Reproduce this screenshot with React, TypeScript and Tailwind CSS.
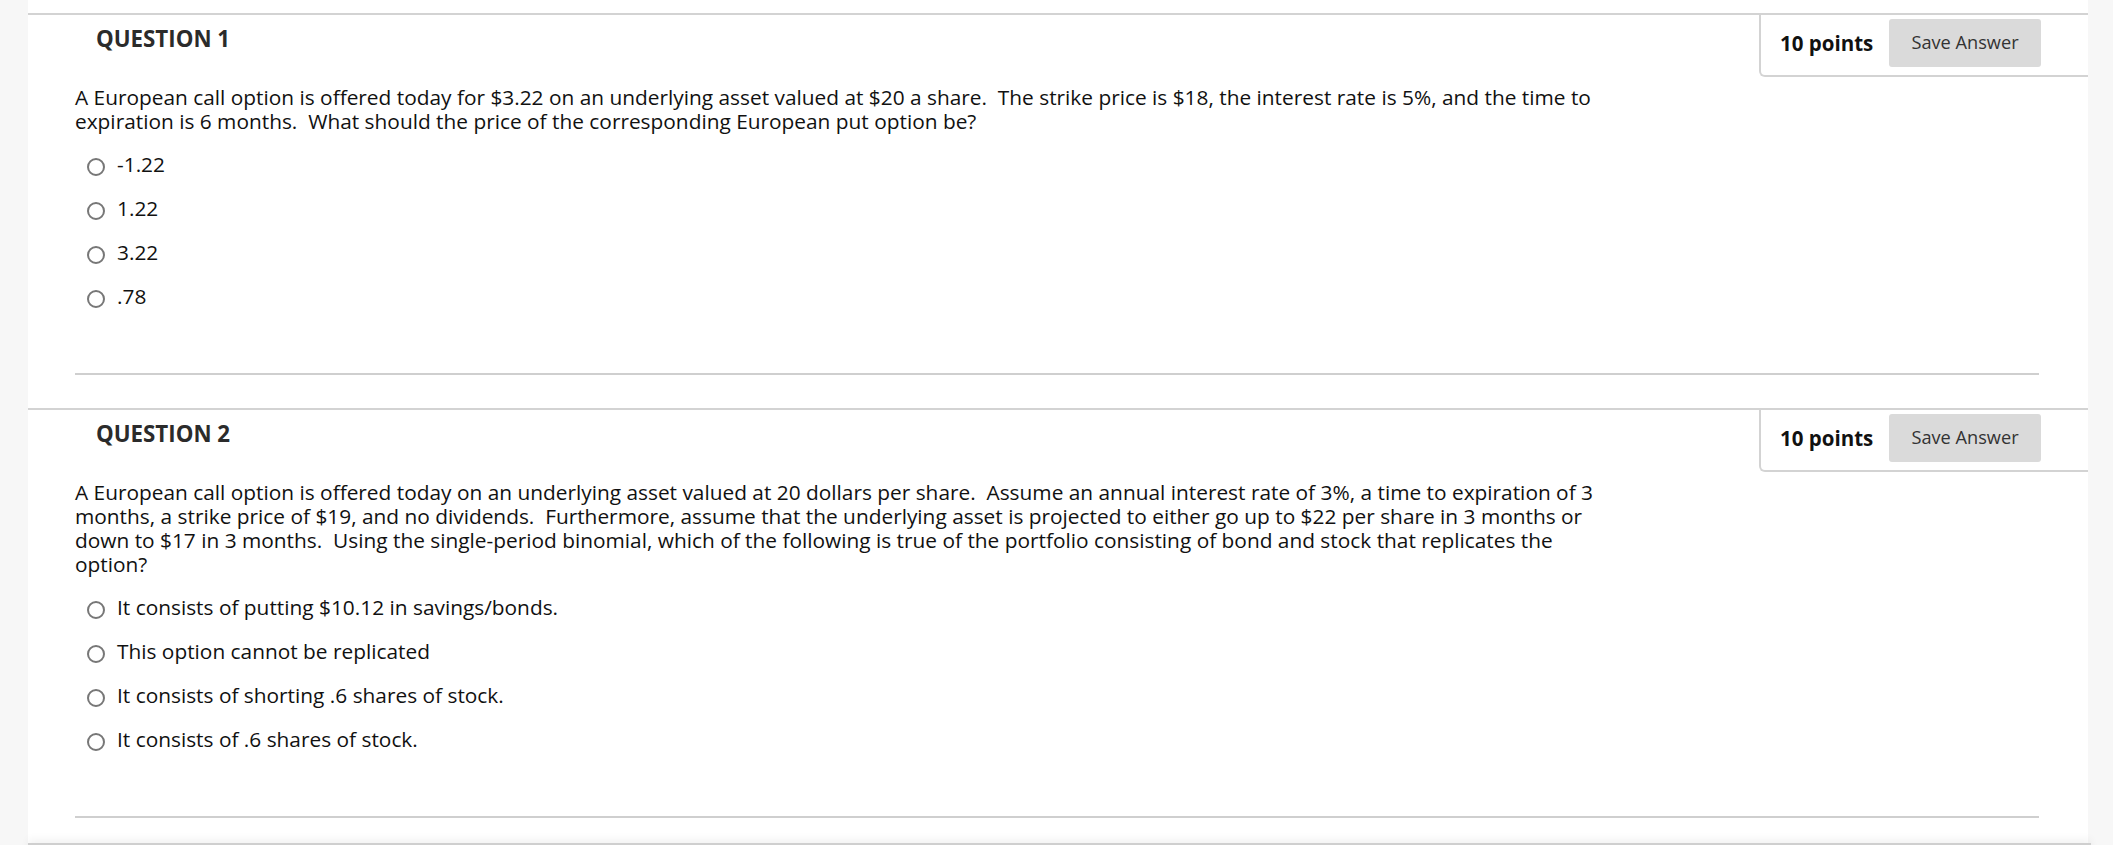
const font = { fontFamily: '"Open Sans", "Noto Sans", sans-serif' };

type Question = {
  number: number;
  points: number;
  text: string;
  answers: string[];
};

const questions: Question[] = [
  {
    number: 1,
    points: 10,
    text: "A European call option is offered today for $3.22 on an underlying asset valued at $20 a share.\u00a0 The strike price is $18, the interest rate is 5%, and the time to expiration is 6 months.\u00a0 What should the price of the corresponding European put option be?",
    answers: ["-1.22", "1.22", "3.22", ".78"],
  },
  {
    number: 2,
    points: 10,
    text: "A European call option is offered today on an underlying asset valued at 20 dollars per share.\u00a0 Assume an annual interest rate of 3%, a time to expiration of 3 months, a strike price of $19, and no dividends.\u00a0 Furthermore, assume that the underlying asset is projected to either go up to $22 per share in 3 months or down to $17 in 3 months.\u00a0 Using the single-period binomial, which of the following is true of the portfolio consisting of bond and stock that replicates the option?",
    answers: [
      "It consists of putting $10.12 in savings/bonds.",
      "This option cannot be replicated",
      "It consists of shorting .6 shares of stock.",
      "It consists of .6 shares of stock.",
    ],
  },
];

const QuestionBlock = ({ q, last }: { q: Question; last: boolean }) => {
  return (
    <section className="border-t-2 border-[#d3d3d3]">
      <div className="flex justify-between items-start">
        <h2 className="pl-[68px] pt-[10px] text-[22.3px] leading-[28px] font-bold text-[#2b2b2b]">
          QUESTION {q.number}
        </h2>
        <div className="w-[329px] h-[62px] pt-[4px] border-l-2 border-b-2 border-[#d3d3d3] rounded-bl-[6px] pl-[19px]">
          <div className="h-[48px] flex items-center">
            <span className="w-[109px] text-[20.5px] font-bold text-[#111]">
              {q.points} points
            </span>
            <button className="w-[152px] h-[48px] bg-[#dadada] rounded-[3px] text-[18.2px] text-[#333]">
              Save Answer
            </button>
          </div>
        </div>
      </div>

      <div className="pl-[47px] pr-[49px]">
        <p className="mt-[8px] w-[1540px] text-[20.85px] leading-[24px] text-[#111]">
          {q.text}
        </p>
        <ul className="mt-[9px]">
          {q.answers.map((a) => (
            <li key={a} className="h-[44px] flex items-center pl-[12px]">
              <span className="w-[18px] h-[18px] mt-[5px] rounded-full border-2 border-[#777] bg-white shrink-0" />
              <span className="ml-[12px] text-[20.85px] leading-[24px] text-[#111]">
                {a}
              </span>
            </li>
          ))}
        </ul>
        <div className="mt-[55px] border-t-2 border-[#cfcfcf]" />
        <div className={last ? "h-[25px]" : "h-[33px]"} />
      </div>
    </section>
  );
};

export default function App() {
  return (
    <div className="min-h-screen bg-[#f7f7f7]" style={font}>
      <div className="ml-[28px] w-[2060px] bg-white pt-[13px]">
        {questions.map((q, i) => (
          <QuestionBlock key={q.number} q={q} last={i === questions.length - 1} />
        ))}
      </div>
      <div className="ml-[28px] w-[2063px] h-[40px] border-t-2 border-r-2 border-[#cfcfcf] bg-[#f2f2f2] shadow-[0_-4px_8px_rgba(0,0,0,0.05)]" />
    </div>
  );
}
